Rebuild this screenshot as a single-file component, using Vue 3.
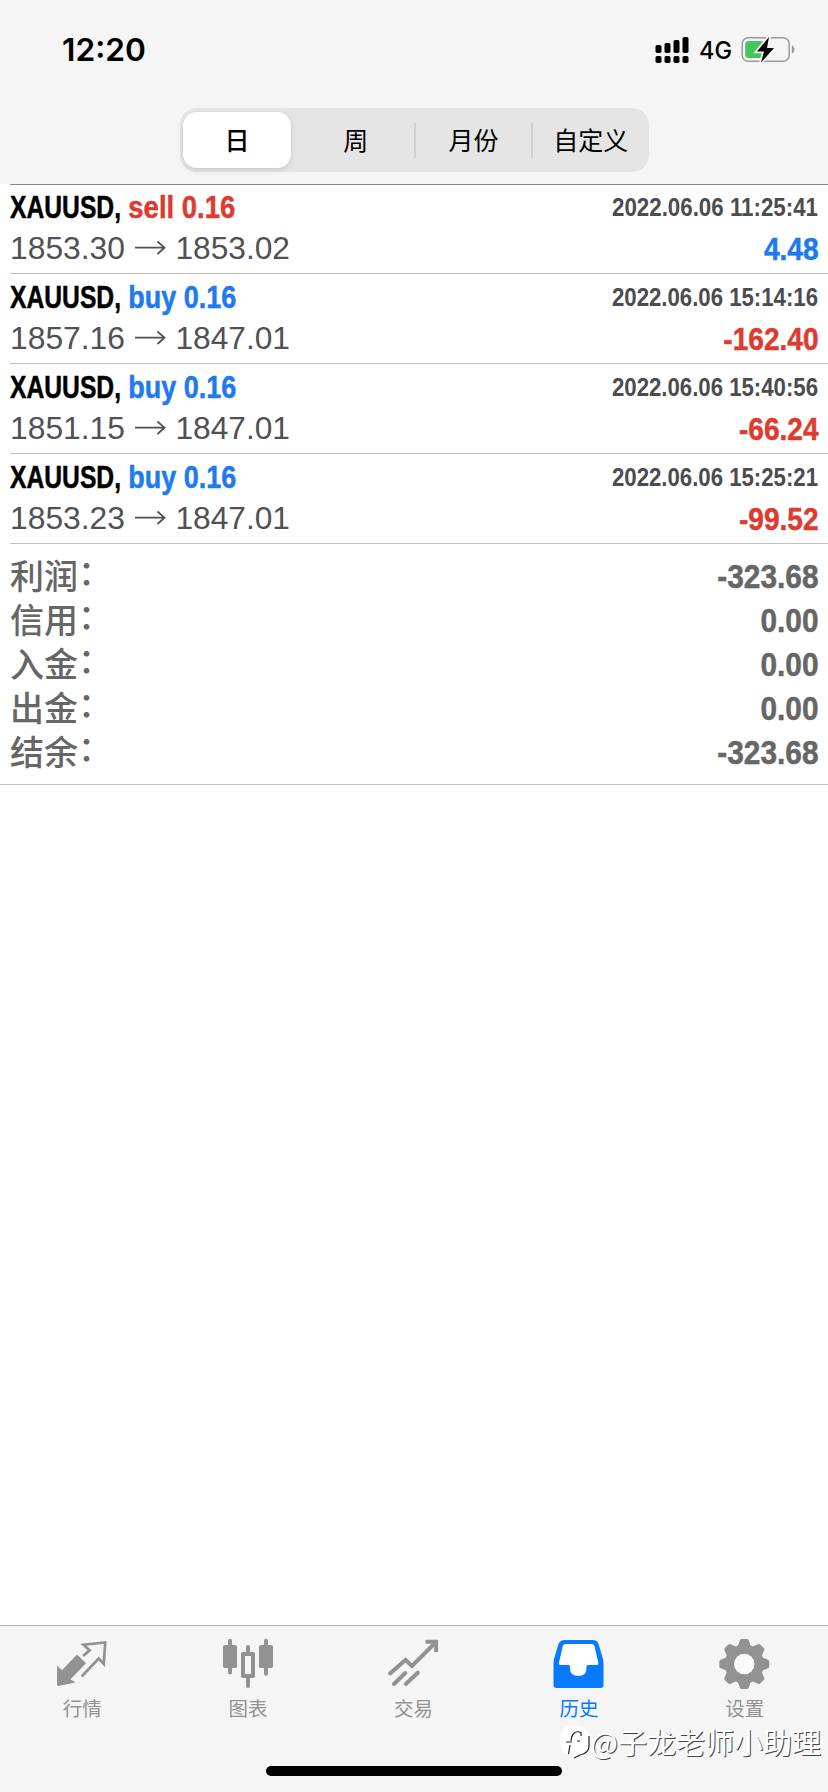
<script setup>
const periods = ['日', '周', '月份', '自定义']

const deals = [
  { side: 'sell', open: '1853.30', close: '1853.02', time: '2022.06.06 11:25:41', profit: '4.48' },
  { side: 'buy', open: '1857.16', close: '1847.01', time: '2022.06.06 15:14:16', profit: '-162.40' },
  { side: 'buy', open: '1851.15', close: '1847.01', time: '2022.06.06 15:40:56', profit: '-66.24' },
  { side: 'buy', open: '1853.23', close: '1847.01', time: '2022.06.06 15:25:21', profit: '-99.52' },
]

const totals = [
  { label: '利润', value: '-323.68' },
  { label: '信用', value: '0.00' },
  { label: '入金', value: '0.00' },
  { label: '出金', value: '0.00' },
  { label: '结余', value: '-323.68' },
]

const tabs = [
  { id: 'quotes', label: '行情' },
  { id: 'chart', label: '图表' },
  { id: 'trade', label: '交易' },
  { id: 'history', label: '历史' },
  { id: 'settings', label: '设置' },
]

const teeth = [0, 45, 90, 135, 180, 225, 270, 315]

// Width of a condensed figure, given the advance of one digit
function condensed(text, digit) {
  let units = 0
  for (const c of text) units += c === '.' ? 0.5 : c === '-' ? 0.6 : 1
  return units * digit
}

// Squeezes a text of natural length `full` into `width`, starting at (x, y)
function squeeze(x, y, width, full) {
  return { transform: `translate(${x} ${y}) scale(${width / full} 1)`, textLength: full, lengthAdjust: 'spacingAndGlyphs' }
}
function figure(text, right, y, digit) {
  const width = condensed(text, digit)
  return squeeze(right - width, y, width, width / 0.89)
}
</script>

<template>
  <div class="screen">
    <header class="top">
      <div class="status">
        <svg class="clock" width="100" height="40">
          <text x="0" y="31" textLength="84" lengthAdjust="spacingAndGlyphs">12:20</text>
        </svg>
        <svg class="signals" width="150" height="40" viewBox="649.500 30 150 40">
          <g>
            <rect x="655" y="45" width="6" height="8" rx="1.7" />
            <rect x="664" y="43" width="6" height="10" rx="1.7" />
            <rect x="673" y="40" width="6" height="13" rx="1.7" />
            <rect x="682" y="37" width="6" height="16" rx="1.7" />
            <rect x="655" y="56" width="6" height="7" rx="1.7" />
            <rect x="664" y="56" width="6" height="7" rx="1.7" />
            <rect x="673" y="56" width="6" height="7" rx="1.7" />
            <rect x="682" y="56" width="6" height="7" rx="1.7" />
          </g>
          <text class="net" x="698.500" y="59" textLength="33" lengthAdjust="spacingAndGlyphs">4G</text>
          <rect x="741.7" y="37.7" width="47" height="23.6" rx="6" fill="none" stroke="#9b9b9b" stroke-width="1.5" />
          <rect x="744.7" y="41" width="19" height="17" rx="3.5" fill="#43c759" />
          <path d="M791.3 45.5c3.6 1 3.6 7 0 8z" fill="#9b9b9b" />
          <path d="M768.5 37 756.5 51.5h7L760.5 62.5 773.5 48h-7z" fill="#000" stroke="#f5f5f5" stroke-width="3.5" paint-order="stroke" />
        </svg>
      </div>
      <nav class="segments">
        <button v-for="(p, i) in periods" :key="p" class="segment" :class="{ on: i === 0, ruled: i > 1 }">{{ p }}</button>
      </nav>
    </header>

    <main class="content">
      <article v-for="d in deals" :key="d.time" class="deal">
        <div class="line">
          <div class="name">
            <svg width="116" height="44">
              <text v-bind="squeeze(0, 33, 111, 141)">XAUUSD,</text>
            </svg>
            <svg width="130" height="44">
              <text :class="d.side" v-bind="squeeze(2.3, 33, d.side === 'sell' ? 107 : 108, 124)">{{ d.side }} 0.16</text>
            </svg>
          </div>
          <svg class="time" width="208" height="44">
            <text v-bind="squeeze(2, 31, 206, 231)">{{ d.time }}</text>
          </svg>
        </div>
        <div class="line">
          <svg class="prices" width="290" height="45">
            <text x="0" y="30" textLength="115" lengthAdjust="spacingAndGlyphs">{{ d.open }}</text>
            <path d="M125 18.7H154.500M147.500 12.5L154.500 18.7L147.500 25" />
            <text x="165.5" y="30" textLength="114.500" lengthAdjust="spacingAndGlyphs">{{ d.close }}</text>
          </svg>
          <svg class="profit" width="130" height="45">
            <text :class="d.profit[0] === '-' ? 'sell' : 'buy'" v-bind="figure(d.profit, 130.5, 30.5, 15.6)">{{ d.profit }}</text>
          </svg>
        </div>
      </article>

      <section class="totals">
        <div v-for="t in totals" :key="t.label" class="total">
          <span class="label">{{ t.label }}<span class="colon">：</span></span>
          <svg width="140" height="44">
            <text v-bind="figure(t.value, 140.5, 34.5, 16.6)">{{ t.value }}</text>
          </svg>
        </div>
      </section>
    </main>

    <footer class="bottom">
      <nav class="tabs">
        <a v-for="t in tabs" :key="t.id" class="tab" :class="{ active: t.id === 'history' }">
          <svg width="60" height="56" viewBox="0 0 60 56">
            <g v-if="t.id === 'quotes'">
              <path fill="currentColor" d="M4 30.500 9 35.3 24 19.5 33 28.3 17.5 44.3 22.5 47.5 5.500 51Q4 51 4 49.500Z" />
              <path class="stroke" stroke-width="2.7" d="M30 21 36.700 15.4 30.500 9.700 52.2 7.500 50.8 29 45.700 23.500 28.700 41.5" />
            </g>
            <g v-else-if="t.id === 'chart'">
              <rect x="5" y="10" width="14" height="23" rx="1.8" fill="currentColor" />
              <rect x="41" y="10" width="14" height="23" rx="1.8" fill="currentColor" />
              <path class="stroke" stroke-width="4" stroke-linecap="round" d="M12 5.700V37.500M48 5.700V38.700M30 12V18M30 42V51" />
              <rect class="stroke" x="25" y="19" width="10" height="22" stroke-width="4" stroke-linejoin="round" />
            </g>
            <g v-else-if="t.id === 'trade'" class="stroke" stroke-width="4" stroke-linecap="round">
              <path d="M6 38.5 21.500 25 28 31 51 8" />
              <path stroke-linecap="butt" d="M41.5 6.800H52.100V17" />
              <path d="M10 49 21.300 38M21.800 49 33.800 37.7" />
            </g>
            <g v-else-if="t.id === 'history'">
              <path fill="currentColor" d="M14.500 5H43Q47 5 48.400 8.500L53 24Q53.500 26 53.500 29V50Q53.500 53 50.500 53H6.500Q3.500 53 3.500 50V29Q3.500 26 4 24L8.700 8.500Q10.300 5 14.500 5Z" />
              <path fill="#fff" d="M15.500 9H41.700Q43.700 9 44.400 11L48.400 28Q48.700 30 46.700 30H38Q36.500 30 36.500 31.500V33Q36.500 41 28.400 41Q20 41 20 33V31.500Q20 30 18.500 30H10.500Q8.500 30 8.900 28L12.800 11Q13.500 9 15.500 9Z" />
            </g>
            <g v-else transform="translate(29.300 29)">
              <circle r="19.500" fill="currentColor" />
              <path v-for="a in teeth" :key="a" :transform="`rotate(${a})`" fill="currentColor" stroke="currentColor" stroke-width="4" stroke-linejoin="round" d="M-5-16.500-2.500-23H2.500L5-16.500Z" />
              <circle r="10.300" fill="#fafafa" />
            </g>
          </svg>
          <span>{{ t.label }}</span>
        </a>
      </nav>
      <div class="home"></div>
      <div class="watermark">
        <svg width="32" height="36" viewBox="0 0 32 36">
          <path fill="#fff" d="M14 1C22 0 29 3 30 11V21C30 27 26 29 21 30L15 34 14 30C5 30 1 25 1 15S6 1 14 1Z" />
          <path fill="none" stroke="#222" stroke-width="1.200" d="M22 11V7.500C16 5 12.500 9 12 16M11 20 9.500 29M7 17H13M18 16H21M30 11V21C30 27 26 29 21 30L15 33" />
        </svg>
        <span>@子龙老师小助理</span>
      </div>
    </footer>
  </div>
</template>

<style>
body {
  margin: 0;
  background: #fff;
}
</style>

<style scoped>
.screen {
  width: 828px;
  height: 1792px;
  display: flex;
  flex-direction: column;
  background: #fff;
  font-family: "Liberation Sans", "Noto Sans CJK SC", sans-serif;
  overflow: hidden;
}
svg {
  display: block;
  flex: none;
}
.top {
  height: 184px;
  box-sizing: border-box;
  background: #f5f5f5;
}
.status {
  height: 108px;
  box-sizing: border-box;
  padding: 30px 28px 0 62px;
  display: flex;
  justify-content: space-between;
}
.clock {
  font: 600 31.5px Inter, sans-serif;
}
.net {
  font: 500 24px Inter, sans-serif;
}
.segments {
  width: 469px;
  height: 64px;
  margin: 0 auto 0 180px;
  box-sizing: border-box;
  padding: 4px 0;
  display: grid;
  grid-template-columns: repeat(4, 1fr);
  align-items: center;
  background: #e5e5e5;
  border-radius: 17px;
}
.segment {
  height: 35px;
  padding: 0 0 3px;
  border: 0;
  background: none;
  color: #000;
  font: 400 25px/32px "Noto Sans CJK SC", sans-serif;
  white-space: nowrap;
}
.segment.ruled {
  margin-left: -1px;
  border-left: 2px solid #d0d0d0;
}
.segment.on {
  height: 56px;
  margin: 0 6px 0 3px;
  background: #fff;
  border-radius: 14px;
  font-weight: 500;
  box-shadow: 0 2px 6px rgba(0, 0, 0, 0.12);
}
.content {
  flex: 1;
}
.deal {
  height: 90px;
  box-sizing: border-box;
  margin-left: 10px;
  padding: 1px 10px 0 0;
  border-top: 1px solid #c0c0c0;
}
.deal:first-child {
  height: 89px;
  padding-top: 0;
  border-top-color: #858585;
}
.line,
.name {
  display: flex;
  justify-content: space-between;
}
.name,
.profit {
  font-size: 31.5px;
  font-weight: 700;
}
.name text,
.profit text,
.total text {
  stroke-width: 0.5;
}
.name text {
  stroke: #000;
}
.time {
  font-size: 25px;
  font-weight: 700;
  fill: #4b4c50;
}
.prices {
  font-size: 31.5px;
  fill: #505155;
}
.prices path {
  fill: none;
  stroke: #505155;
  stroke-width: 1.8;
}
.line .sell {
  fill: #dd3b30;
  stroke: #dd3b30;
}
.line .buy {
  fill: #2079ee;
  stroke: #2079ee;
}
.profit,
.time,
.total svg {
  overflow: visible;
}
.totals {
  box-sizing: border-box;
  height: 242px;
  padding-top: 10px;
  background: linear-gradient(#c0c0c0, #c0c0c0) 10px 0 / 100% 1px no-repeat;
  border-bottom: 1px solid #c0c0c0;
}
.total {
  height: 44px;
  padding: 0 10px;
  display: flex;
  justify-content: space-between;
  color: #666;
}
.total svg {
  font-size: 33.5px;
  font-weight: 700;
  fill: #666;
}
.total text {
  stroke: #666;
}
.label {
  height: 44px;
  font: 500 34px/43px "Noto Sans CJK SC", sans-serif;
}
.colon {
  line-height: 1;
  vertical-align: 4px;
}
.bottom {
  position: relative;
  height: 167px;
  box-sizing: border-box;
  border-top: 1px solid #b2b2b2;
  background: #f5f5f5;
}
.tabs {
  display: grid;
  grid-template-columns: repeat(5, 1fr);
  height: 140px;
}
.tab {
  display: flex;
  flex-direction: column;
  align-items: center;
  padding-top: 9px;
  color: #929292;
  font: 400 19.5px/28px "Noto Sans CJK SC", sans-serif;
}
.tab span {
  margin-top: 3px;
  padding-right: 1px;
}
.tab.active {
  color: #087aff;
}
.stroke {
  fill: none;
  stroke: currentColor;
}
.home {
  width: 296px;
  height: 10px;
  margin: 0 auto;
  border-radius: 5px;
  background: #000;
}
.watermark {
  position: absolute;
  right: 7px;
  top: 98px;
  display: flex;
  align-items: center;
  color: #fff;
  font: 400 29px/34px "Noto Sans CJK SC", sans-serif;
  white-space: nowrap;
  text-shadow: 1px 1px 0 #444;
}
.watermark span {
  padding-bottom: 4px;
}
</style>
